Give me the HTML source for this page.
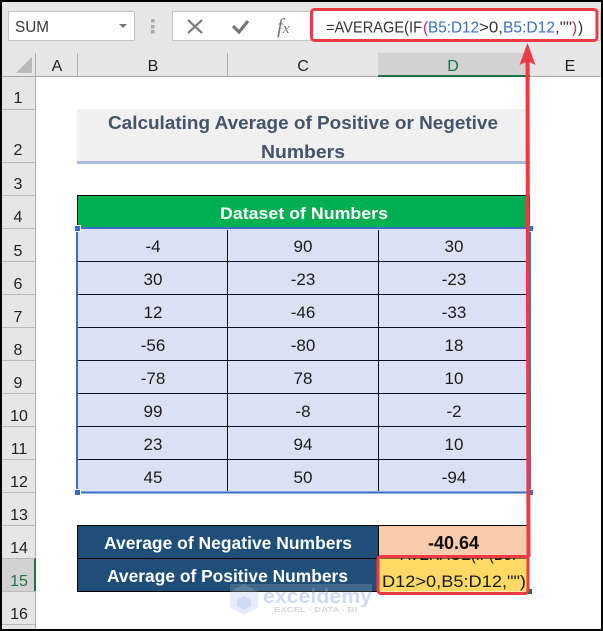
<!DOCTYPE html>
<html><head><meta charset="utf-8"><style>
html,body{margin:0;padding:0;background:#fff;width:603px;height:631px;overflow:hidden}
svg{display:block}
text{font-family:"Liberation Sans",sans-serif}
.h{font-size:16px;fill:#222;text-anchor:middle}
.n{font-size:17px;fill:#1c1c1c;text-anchor:middle}
</style></head><body>
<svg width="603" height="631" viewBox="0 0 603 631" xmlns="http://www.w3.org/2000/svg">
<defs>
<clipPath id="c15"><rect x="379" y="558" width="147" height="33"/></clipPath>
<clipPath id="onblue"><rect x="225" y="580" width="150" height="12"/></clipPath>
<clipPath id="onwhite"><rect x="225" y="592" width="150" height="30"/></clipPath>
</defs>
<rect width="603" height="631" fill="#fff"/>
<!-- toolbar -->
<rect x="0" y="0" width="603" height="53" fill="#e6e6e6"/>
<rect x="8.5" y="11.5" width="126" height="29" fill="#fff" stroke="#c4c4c4"/>
<text x="15" y="32" font-size="15.5" fill="#3a3a3a" textLength="34" lengthAdjust="spacingAndGlyphs">SUM</text>
<path d="M119 24h8l-4 4z" fill="#777"/>
<rect x="151" y="19" width="3.5" height="3.5" fill="#a8a8a8"/><rect x="151" y="25" width="3.5" height="3.5" fill="#a8a8a8"/><rect x="151" y="30" width="3.5" height="3.500" fill="#a8a8a8"/>
<rect x="172.5" y="11.5" width="428" height="29" fill="#fff" stroke="#c4c4c4"/>
<path d="M188 20l14 13M202 20l-14 13" stroke="#777" stroke-width="2.2" fill="none"/>
<path d="M233 26l6 6 9-11" stroke="#777" stroke-width="3.2" fill="none"/>
<text x="277" y="33" font-size="21" font-style="italic" fill="#777" style="font-family:'Liberation Serif',serif">f<tspan font-size="15">x</tspan></text>
<!-- headers -->
<rect x="0" y="53" width="603" height="24" fill="#e6e6e6"/>
<rect x="0" y="53" width="36" height="578" fill="#e6e6e6"/>
<path d="M32 57v16H16z" fill="#b9b9b9"/>
<rect x="378" y="53" width="152" height="24" fill="#d2d2d2"/>
<rect x="0" y="76" width="603" height="1" fill="#a6a6a6"/>
<rect x="378" y="75" width="152" height="2" fill="#217346"/>
<path d="M35.500 53V631M77.500 53V76M227.500 53V76" stroke="#b0b0b0" fill="none"/>
<text class="h" x="57" y="71">A</text><text class="h" x="153" y="71">B</text><text class="h" x="303" y="71">C</text><text class="h" x="453" y="71" style="fill:#217346">D</text><text class="h" x="570" y="71">E</text>
<!-- row headers -->
<rect x="2" y="558" width="33" height="33" fill="#d2d2d2"/>
<rect x="34" y="558" width="2" height="33" fill="#217346"/>
<path d="M2 109.500H35M2 162.500H35M2 195.500H35M2 228.500H35M2 261.500H35M2 294.500H35M2 327.500H35M2 360.500H35M2 393.500H35M2 426.500H35M2 459.500H35M2 492.500H35M2 525.500H35M2 558.500H35M2 591.500H35M2 624.500H35" stroke="#b8b8b8" fill="none"/>
<g>
<text class="h" x="18" y="103">1</text><text class="h" x="18" y="155">2</text><text class="h" x="18" y="189">3</text><text class="h" x="18" y="222">4</text><text class="h" x="18" y="256">5</text><text class="h" x="18" y="289">6</text><text class="h" x="18" y="322">7</text><text class="h" x="18" y="355">8</text><text class="h" x="18" y="388">9</text><text class="h" x="19" y="421">10</text><text class="h" x="19" y="454">11</text><text class="h" x="19" y="487">12</text><text class="h" x="19" y="520">13</text><text class="h" x="19" y="553">14</text><text class="h" x="19" y="586" style="fill:#217346">15</text><text class="h" x="19" y="619">16</text>
</g>
<!-- title -->
<rect x="77" y="109" width="452" height="52" fill="#f0f0f0"/>
<rect x="77" y="161" width="453" height="3" fill="#a9bbe0"/>
<text x="108" y="129" font-size="18.500" font-weight="bold" fill="#44546a" textLength="390" lengthAdjust="spacingAndGlyphs">Calculating Average of Positive or Negetive</text>
<text x="261" y="158" font-size="18.500" font-weight="bold" fill="#44546a" textLength="84" lengthAdjust="spacingAndGlyphs">Numbers</text>
<!-- green header -->
<rect x="77.500" y="195.500" width="452" height="33" fill="#00b050" stroke="#000"/>
<text x="220" y="219" font-size="17" font-weight="bold" fill="#fff" textLength="168" lengthAdjust="spacingAndGlyphs">Dataset of Numbers</text>
<!-- data -->
<rect x="77" y="228" width="452" height="264" fill="#d9e1f2"/>
<path d="M78 261.500H528M78 294.500H528M78 327.500H528M78 360.500H528M78 393.500H528M78 426.500H528M78 459.500H528M227.500 230V491M378.500 230V491" stroke="#0a0f1e" fill="none"/>
<rect x="77" y="228" width="453" height="264.500" fill="none" stroke="#3a6cc4" stroke-width="2"/>
<g fill="#3a6cc4" stroke="#fff" stroke-width="1"><rect x="74.500" y="225.500" width="6" height="6"/><rect x="527.500" y="225.500" width="6" height="6"/><rect x="74.500" y="489.500" width="6" height="6"/><rect x="527.500" y="489.500" width="6" height="6"/></g>
<g>
<text class="n" x="153" y="252">-4</text><text class="n" x="303" y="252">90</text><text class="n" x="454" y="252">30</text>
<text class="n" x="153" y="285">30</text><text class="n" x="303" y="285">-23</text><text class="n" x="454" y="285">-23</text>
<text class="n" x="153" y="318">12</text><text class="n" x="303" y="318">-46</text><text class="n" x="454" y="318">-33</text>
<text class="n" x="153" y="351">-56</text><text class="n" x="303" y="351">-80</text><text class="n" x="454" y="351">18</text>
<text class="n" x="153" y="384">-78</text><text class="n" x="303" y="384">78</text><text class="n" x="454" y="384">10</text>
<text class="n" x="153" y="417">99</text><text class="n" x="303" y="417">-8</text><text class="n" x="454" y="417">-2</text>
<text class="n" x="153" y="450">23</text><text class="n" x="303" y="450">94</text><text class="n" x="454" y="450">10</text>
<text class="n" x="153" y="483">45</text><text class="n" x="303" y="483">50</text><text class="n" x="454" y="483">-94</text>
</g>
<!-- bottom table -->
<rect x="77.500" y="525.500" width="301" height="33" fill="#1f4e78" stroke="#000"/>
<rect x="77.500" y="558.500" width="301" height="33" fill="#1f4e78" stroke="#000"/>
<rect x="378.500" y="525.500" width="150" height="33" fill="#f8cbad" stroke="#000"/>
<rect x="378.500" y="558.500" width="150" height="33" fill="#ffd966"/>
<text x="104" y="549" font-size="17.500" font-weight="bold" fill="#fff" textLength="248" lengthAdjust="spacingAndGlyphs">Average of Negative Numbers</text>
<text x="107" y="582" font-size="17.500" font-weight="bold" fill="#fff" textLength="241" lengthAdjust="spacingAndGlyphs">Average of Positive Numbers</text>
<text x="428" y="549" font-size="18" font-weight="bold" fill="#111" textLength="51" lengthAdjust="spacingAndGlyphs">-40.64</text>
<g clip-path="url(#c15)" fill="#1a1a1a" font-size="17">
<text x="392" y="560" textLength="124" lengthAdjust="spacingAndGlyphs">=AVERAGE(IF(B5:</text>
<text x="382" y="587" textLength="144" lengthAdjust="spacingAndGlyphs">D12&gt;0,B5:D12,"")</text>
</g>
<rect x="527" y="589" width="5" height="5" fill="#217346"/>
<!-- watermark -->
<rect x="230" y="584" width="142" height="8" fill="#fff" fill-opacity=".16"/>
<g clip-path="url(#onwhite)">
<path d="M244 584l14 8v16l-14 7-14-7v-16z" fill="#e6ecfb"/>
<path d="M244 596l7 4v6l-7 4-7-4v-6z" fill="#cfdbf6"/>
<text x="263" y="603" font-size="20" font-weight="bold" fill="#cfdaf6" textLength="109" lengthAdjust="spacingAndGlyphs">exceldemy</text>
</g>
<g clip-path="url(#onblue)" opacity=".14">
<path d="M244 584l14 8H230z" fill="#fff"/>
<text x="263" y="603" font-size="20" font-weight="bold" fill="#fff" textLength="109" lengthAdjust="spacingAndGlyphs">exceldemy</text>
</g>
<text x="274" y="612" font-size="7.500" font-weight="bold" fill="#d6d6d6" textLength="83" lengthAdjust="spacingAndGlyphs">EXCEL - DATA - BI</text>
<!-- formula -->
<rect x="311.500" y="9.500" width="285.500" height="31" rx="3" fill="#fff" stroke="#ee3a45" stroke-width="3"/>
<g font-size="15.500" fill="#333">
<text x="326" y="32.500" textLength="96" lengthAdjust="spacingAndGlyphs">=AVERAGE(IF</text>
<text x="423" y="32.500" fill="#b5347c">(</text>
<text x="428" y="32.500" fill="#3a6cc4" textLength="51" lengthAdjust="spacingAndGlyphs">B5:D12</text>
<text x="479" y="32.500" textLength="24" lengthAdjust="spacingAndGlyphs">&gt;0,</text>
<text x="503" y="32.500" fill="#3a6cc4" textLength="52" lengthAdjust="spacingAndGlyphs">B5:D12</text>
<text x="555" y="32.500" textLength="17" lengthAdjust="spacingAndGlyphs">,""</text>
<text x="572" y="32.500" fill="#b5347c">)</text>
<text x="578" y="32.500">)</text>
</g>
<!-- cell outline + arrow -->
<rect x="378" y="556.500" width="150" height="37" rx="3" fill="none" stroke="#ee3a45" stroke-width="3"/>
<path d="M525.500 60H529.500L530.500 557H526.500z" fill="#ee3a45"/>
<path d="M527.500 43L535.500 65L527.500 61L519.500 65z" fill="#ee3a45"/>
<!-- frame -->
<rect x="0" y="0" width="603" height="2" fill="#000"/>
<rect x="0" y="0" width="2" height="631" fill="#000"/>
<rect x="601" y="0" width="2" height="631" fill="#000"/>
<rect x="0" y="629" width="603" height="2" fill="#000"/>
</svg>
</body></html>
